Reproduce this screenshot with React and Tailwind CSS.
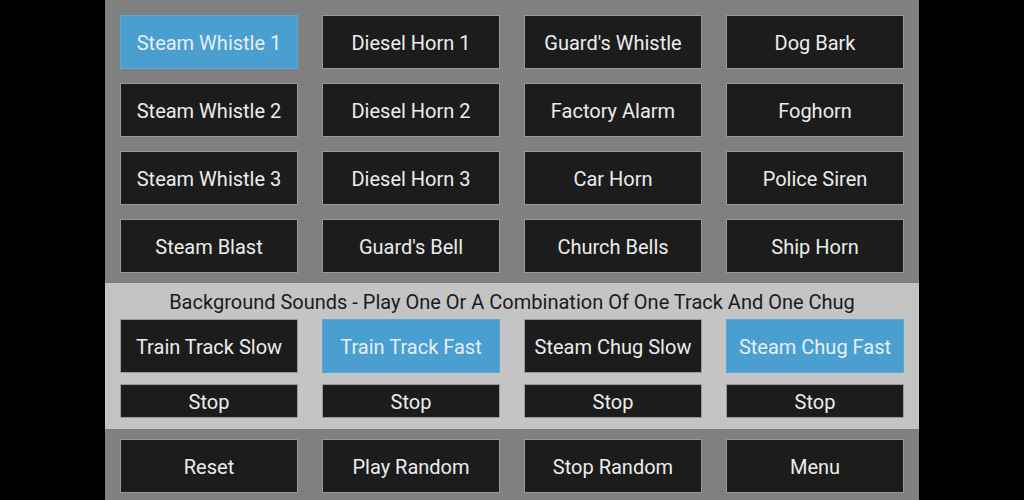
const topRows = [
  ['Steam Whistle 1', 'Diesel Horn 1', "Guard's Whistle", 'Dog Bark'],
  ['Steam Whistle 2', 'Diesel Horn 2', 'Factory Alarm', 'Foghorn'],
  ['Steam Whistle 3', 'Diesel Horn 3', 'Car Horn', 'Police Siren'],
  ['Steam Blast', "Guard's Bell", 'Church Bells', 'Ship Horn'],
];

const active = ['Steam Whistle 1', 'Train Track Fast', 'Steam Chug Fast'];

const Btn = ({ label, h = 'h-[54px]' }) => {
  const on = active.includes(label);
  return (
    <button
      className={`${h} w-full flex items-center justify-center pt-[2px] text-[20px] border ${
        on ? 'bg-[#4a9fd0] border-[#5aa8d6] text-[#e6eef4]' : 'bg-[#1c1c1c] border-[#9a9a9a] text-[#ececec]'
      }`}
    >
      {label}
    </button>
  );
};

export default function App() {
  return (
    <div className="w-[1024px] h-[500px] bg-black flex justify-center overflow-hidden" style={{ fontFamily: 'Roboto, "Liberation Sans", sans-serif' }}>
      <div className="w-[814px] h-full bg-[#808080] flex flex-col">
        <div className="px-[15px] pt-[15px] pb-[10px] flex flex-col gap-[14px]">
          {topRows.map((row, i) => (
            <div key={i} className="grid grid-cols-4 gap-x-[24px]">
              {row.map((l) => <Btn key={l} label={l} />)}
            </div>
          ))}
        </div>
        <div className="bg-[#c4c4c4] px-[15px] pb-[11px] flex flex-col">
          <div className="h-[36px] flex items-center justify-center pt-[2px] text-[20px] text-[#1e1a1a]">
            Background Sounds - Play One Or A Combination Of One Track And One Chug
          </div>
          <div className="grid grid-cols-4 gap-x-[24px] gap-y-[11px]">
            {['Train Track Slow', 'Train Track Fast', 'Steam Chug Slow', 'Steam Chug Fast'].map((l) => <Btn key={l} label={l} />)}
            {[0, 1, 2, 3].map((i) => <Btn key={'s' + i} label="Stop" h="h-[34px]" />)}
          </div>
        </div>
        <div className="px-[15px] pt-[10px] grid grid-cols-4 gap-x-[24px]">
          {['Reset', 'Play Random', 'Stop Random', 'Menu'].map((l) => <Btn key={l} label={l} />)}
        </div>
      </div>
    </div>
  );
}
